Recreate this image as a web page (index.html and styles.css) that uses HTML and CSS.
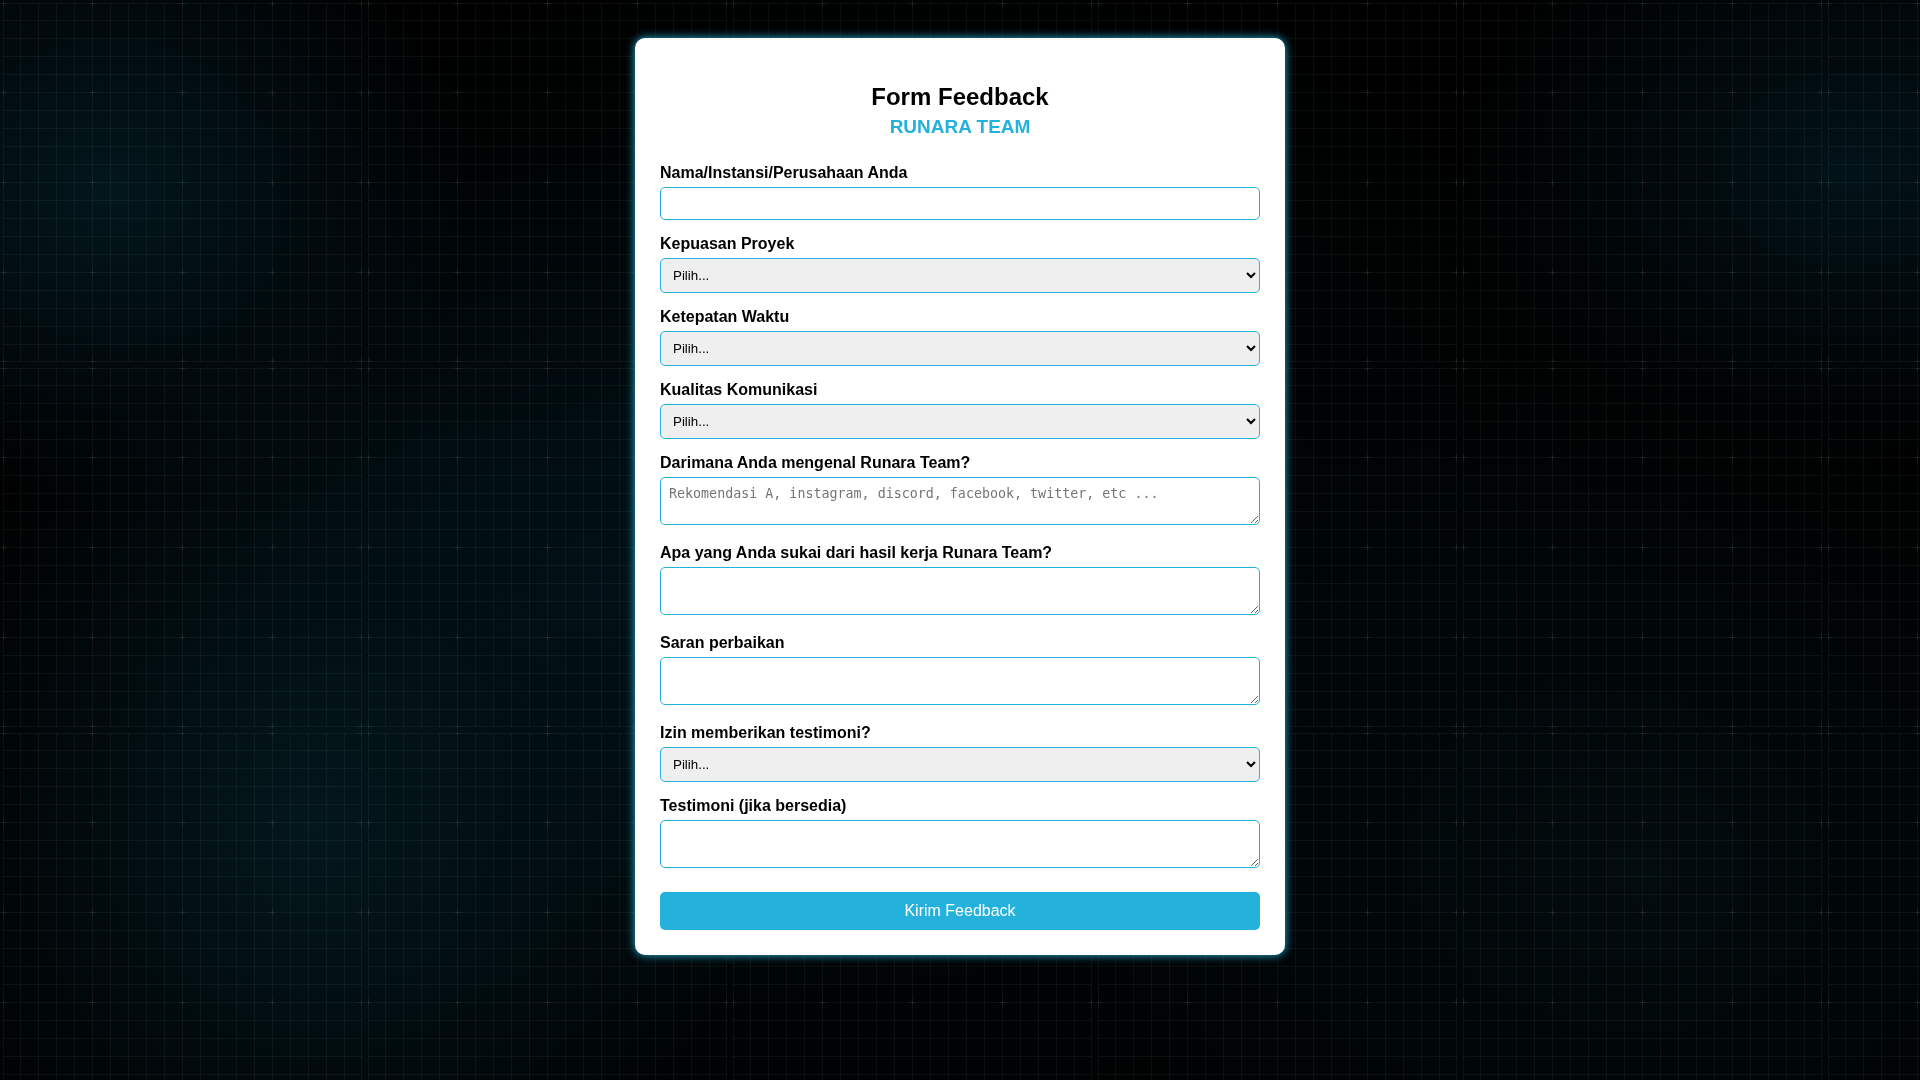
FILE: index.html
```html
<!DOCTYPE html>
<html lang="id">
<head>
<meta charset="utf-8">
<meta name="viewport" content="width=device-width, initial-scale=1">
<title>Form Feedback - Runara Team</title>
<link rel="stylesheet" href="styles.css">
</head>
<body>
<svg class="grid" aria-hidden="true">
  <defs>
    <pattern id="cells" width="365" height="365" patternUnits="userSpaceOnUse">
      <g stroke="#c8e6dc" stroke-opacity=".055" fill="none">
        <path d="M3 3.5H362M3 20.5H362M3 38.5H362M3 56.5H362M3 74.5H362M3 92.5H362M3 110.5H362M3 128.5H362M3 146.5H362M3 164.5H362M3 182.5H362M3 200.5H362M3 218.5H362M3 236.5H362M3 254.5H362M3 272.5H362M3 290.5H362M3 308.5H362M3 326.5H362M3 344.5H362M3 361.5H362"/>
        <path d="M3.5 3V362M20.5 3V362M38.5 3V362M56.5 3V362M74.5 3V362M92.5 3V362M110.5 3V362M128.5 3V362M146.5 3V362M164.5 3V362M182.5 3V362M200.5 3V362M218.5 3V362M236.5 3V362M254.5 3V362M272.5 3V362M290.5 3V362M308.5 3V362M326.5 3V362M344.5 3V362M361.5 3V362"/>
      </g>
      <!-- Crosses on every fifth line -->
      <g stroke="#c8e6dc" stroke-opacity=".07" fill="none">
        <path stroke-dasharray="7 82.5" d="M0 3.5H365M0 92.5H365M0 182.5H365M0 272.5H365M0 361.5H365"/>
        <path stroke-dasharray="7 82.5" d="M3.5 0V365M92.5 0V365M182.5 0V365M272.5 0V365M361.5 0V365"/>
      </g>
    </pattern>
  </defs>
  <rect width="100%" height="100%" fill="url(#cells)"/>
</svg>
<main class="card">
  <header class="heading">
    <h1 class="title">Form Feedback</h1>
    <p class="team">RUNARA TEAM</p>
  </header>
  <form class="form">
    <div class="field">
      <label for="nama">Nama/Instansi/Perusahaan Anda</label>
      <input class="control" type="text" id="nama">
    </div>
    <div class="field">
      <label for="kepuasan">Kepuasan Proyek</label>
      <select class="control" id="kepuasan"><option>Pilih...</option></select>
    </div>
    <div class="field">
      <label for="waktu">Ketepatan Waktu</label>
      <select class="control" id="waktu"><option>Pilih...</option></select>
    </div>
    <div class="field">
      <label for="komunikasi">Kualitas Komunikasi</label>
      <select class="control" id="komunikasi"><option>Pilih...</option></select>
    </div>
    <div class="field field-long">
      <label for="sumber">Darimana Anda mengenal Runara Team?</label>
      <textarea class="control" id="sumber" rows="2" placeholder="Rekomendasi A, instagram, discord, facebook, twitter, etc ..."></textarea>
    </div>
    <div class="field field-long">
      <label for="suka">Apa yang Anda sukai dari hasil kerja Runara Team?</label>
      <textarea class="control" id="suka" rows="2"></textarea>
    </div>
    <div class="field field-long">
      <label for="saran">Saran perbaikan</label>
      <textarea class="control" id="saran" rows="2"></textarea>
    </div>
    <div class="field">
      <label for="izin">Izin memberikan testimoni?</label>
      <select class="control" id="izin"><option>Pilih...</option></select>
    </div>
    <div class="field field-long">
      <label for="testimoni">Testimoni (jika bersedia)</label>
      <textarea class="control" id="testimoni" rows="2"></textarea>
    </div>
    <button class="submit" type="submit">Kirim Feedback</button>
  </form>
</main>
</body>
</html>
```
FILE: styles.css
```css
* {
  box-sizing: border-box;
}

body {
  margin: 0;
  min-height: 100vh;
  padding: 38px 20px;
  font-family: "Liberation Sans", Arial, sans-serif;
  font-size: 16px;
  line-height: 18px;
  color: #000;
  background-color: #000;
  background-image:
    radial-gradient(ellipse 360px 320px at 110px 190px, rgba(3, 24, 30, .95), rgba(2, 18, 24, .6) 50%, transparent),
    radial-gradient(ellipse 400px 300px at 1850px 170px, rgba(2, 20, 26, .95), rgba(2, 15, 20, .6) 45%, transparent),
    radial-gradient(ellipse 440px 480px at 310px 830px, rgba(4, 25, 31, .9), rgba(2, 18, 23, .6) 50%, transparent),
    radial-gradient(ellipse 520px 460px at 600px 580px, rgba(1, 18, 24, .85), transparent),
    radial-gradient(ellipse 560px 500px at 1640px 870px, rgba(2, 12, 15, .95), transparent),
    radial-gradient(ellipse 900px 700px at 860px 600px, rgba(1, 10, 13, .8), transparent);
  background-attachment: fixed;
}

.grid {
  position: fixed;
  inset: 0;
  z-index: -1;
  width: 100%;
  height: 100%;
}

.card {
  max-width: 650px;
  margin: 0 auto;
  padding: 25px;
  background: #fff;
  border-radius: 10px;
  box-shadow: 0 0 10px #24b2dd;
}

.heading {
  padding-top: 20px;
  margin-bottom: 26px;
  text-align: center;
}

.title {
  margin: 0 0 5px;
  font-size: 24px;
  line-height: 28px;
}

.team {
  margin: 0;
  font-size: 19px;
  line-height: 22px;
  font-weight: bold;
  color: #24b2dd;
}

.field {
  display: flex;
  flex-direction: column;
  gap: 5px;
  margin-bottom: 15px;
}

.field-long {
  margin-bottom: 19px;
}

.field label {
  font-weight: bold;
}

.control {
  width: 100%;
  padding: 8px;
  border: 1px solid #24b2dd;
  border-radius: 5px;
}

select.control {
  height: 35px;
}

textarea.control {
  resize: vertical;
}

.submit {
  display: block;
  width: 100%;
  margin-top: 24px;
  padding: 10px;
  border: 0;
  border-radius: 5px;
  font-family: inherit;
  font-size: 16px;
  line-height: 18px;
  color: #fff;
  background: #24b2dd;
}
```
